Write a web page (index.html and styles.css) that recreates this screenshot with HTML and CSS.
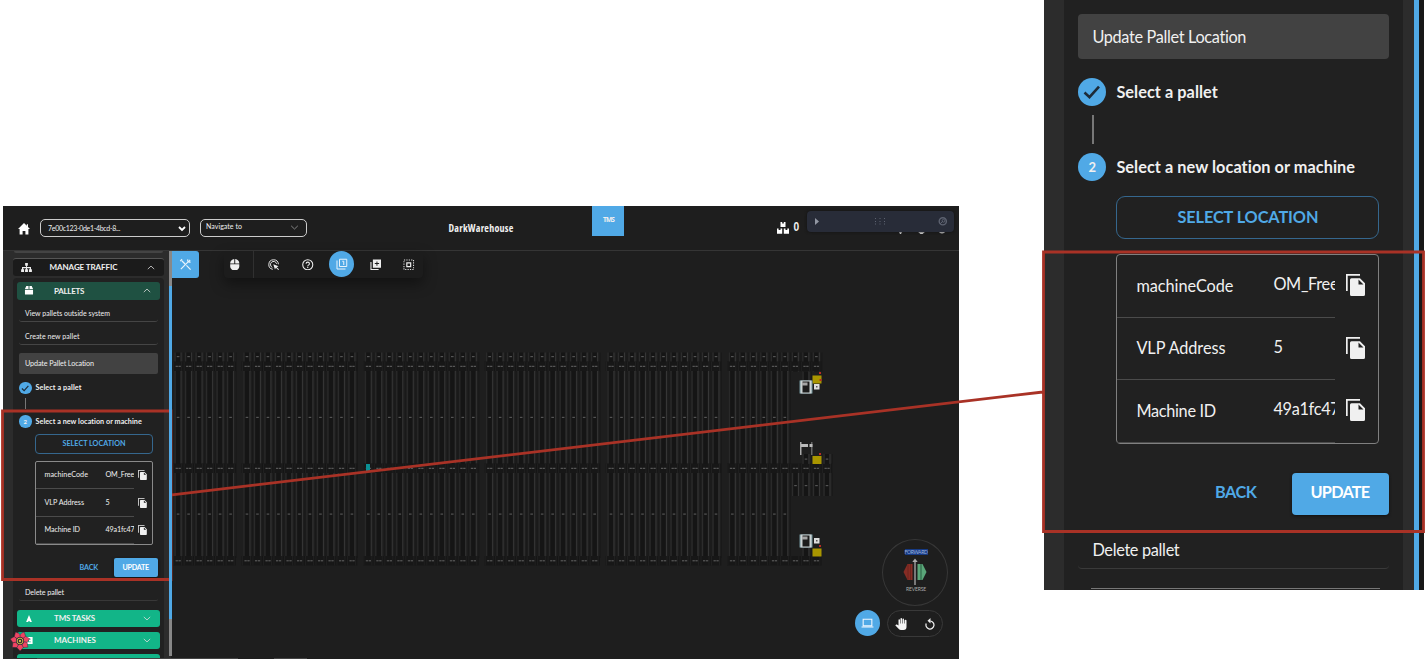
FILE: index.html
```html
<!DOCTYPE html>
<html lang="en">
<head>
<meta charset="utf-8">
<title>DarkWarehouse</title>
<link rel="stylesheet" href="styles.css">
</head>
<body>
<svg class="defs" aria-hidden="true">
  <symbol id="copy" viewBox="0 0 19 22"><path d="M0 0h14v1.700H1.700V17H0z" fill="currentColor"/><path d="M5.500 4.200H14l5 5V20.500q0 1.500-1.500 1.500h-12Q4 22 4 20.500V5.700q0-1.500 1.500-1.500zM12.500 5.500v5h5z" fill="currentColor" fill-rule="evenodd"/></symbol>
  <symbol id="check" viewBox="0 0 28 28"><path d="M6.500 14.500l5 4.700L21 8.700" fill="none" stroke="#1d2b38" stroke-width="2.600"/></symbol>
  <symbol id="down" viewBox="0 0 10 6"><path d="M1 1l4 3.800L9 1" fill="none" stroke="currentColor"/></symbol>
  <symbol id="up" viewBox="0 0 10 6"><path d="M1 5l4-3.800L9 5" fill="none" stroke="currentColor"/></symbol>
</svg>
<main class="sheet">
  <section class="app">
    <header class="bar">
      <svg class="home" viewBox="0 0 12 12"><path d="M6 0L0 6h1.600v5.500h3V8h2.800v3.500h3V6H12L10 4V1.200H8.800V2.800z" fill="#fff"/></svg>
      <div class="select run"><span data-width="72">7e00c123-0de1-4bcd-8...</span><svg class="caret" viewBox="0 0 8 6"><path d="M1 1l3 3 3-3" fill="none" stroke="#fff" stroke-width="1.800"/></svg></div>
      <div class="select nav"><span data-width="36">Navigate to</span><svg class="caret thin"><use href="#down"/></svg></div>
      <div class="title"><span data-width="65">DarkWarehouse</span></div>
      <div class="tile"><span data-width="11">TMS</span></div>
      <svg class="boxes" viewBox="0 0 12 12"><path d="M3.500 0h1.700v1.500h1.600V0h1.700v5h-5zM0 6.500h1.600V8H3.500V6.500h1.700v5.300H0zM6.800 6.500h1.700V8h1.800V6.500H12v5.300H6.800z" fill="#fff"/></svg>
      <b class="count">0</b>
      <svg class="peek" viewBox="0 0 50 4"><path d="M0 0h9L6 1 5 3H4L3 1zM21 0h9l-3.500 3h-2zM42 0q4 5 8 0l-2 0q-2 2-4 0z" fill="#ddd"/></svg>
      <div class="dock">
        <svg viewBox="0 0 147 21"><path d="M8 7l4 3.500L8 14z" fill="#9297a3"/><g fill="#5d6270"><path d="M68 7h1v1h-1zM72.500 7h1v1h-1zM77 7h1v1h-1zM68 10h1v1h-1zM72.500 10h1v1h-1zM77 10h1v1h-1zM68 12.500h1v1h-1zM72.500 12.500h1v1h-1zM77 12.500h1v1h-1z"/></g><circle cx="135.800" cy="10.300" r="3.600" fill="none" stroke="#5d6270" stroke-width="1.400"/><circle cx="136.500" cy="9.800" r="1.400" fill="none" stroke="#5d6270"/><path d="M133 13l3-3" stroke="#5d6270"/></svg>
      </div>
    </header>
    <div class="work">
      <aside class="side">
        <div class="stub"></div>
        <div class="traffic head"><svg class="hicon" viewBox="0 0 12 10"><path d="M4.500 0h3v3h-1v1.500H11V7h1v3H8.700V7h1V5.700H6.600V7h1v3H4.400V7h1V5.700H2.300V7h1v3H0V7h1V4.500h4.500V3h-1z" fill="#eee"/></svg><span data-width="68">MANAGE TRAFFIC</span><svg class="arrow"><use href="#up"/></svg></div>
        <div class="group">
          <div class="head pallets"><svg class="hicon" viewBox="0 0 10 10"><path d="M2 0h2.500v3.300H.5zM5.500 0H8l1.500 3.300h-4zM.5 4.200h9V9.500h-9z" fill="#fff"/></svg><span data-width="30">PALLETS</span><svg class="arrow"><use href="#up"/></svg></div>
          <div class="item"><span data-width="85">View pallets outside system</span></div>
          <div class="item second"><span data-width="54.500">Create new pallet</span></div>
          <div class="panel small">
            <div class="active"><span data-width="69">Update Pallet Location</span></div>
            <div class="step"><i class="dot"><svg><use href="#check"/></svg></i><span data-width="46">Select a pallet</span></div>
            <div class="link"></div>
            <div class="step two"><i class="dot">2</i><span data-width="106.500">Select a new location or machine</span></div>
            <div class="choose"><span data-width="63">SELECT LOCATION</span></div>
            <div class="table">
              <div class="row"><div class="cells"><span class="key" data-width="43.500">machineCode</span><span class="val">OM_Free</span></div><svg class="copy"><use href="#copy"/></svg></div>
              <div class="row"><div class="cells"><span class="key" data-width="39.500">VLP Address</span><span class="val">5</span></div><svg class="copy"><use href="#copy"/></svg></div>
              <div class="row"><div class="cells"><span class="key" data-width="35.500">Machine ID</span><span class="val">49a1fc47</span></div><svg class="copy"><use href="#copy"/></svg></div>
            </div>
            <div class="actions"><span class="back" data-width="18.500">BACK</span><b class="update"><span data-width="26.500">UPDATE</span></b></div>
            <div class="delete"><span data-width="39">Delete pallet</span></div>
          </div>
          <div class="head green"><svg class="hicon" viewBox="0 0 10 10"><path d="M5 1L1.800 9h2L5 7.500 6.200 9h2z" fill="#fff"/></svg><span data-width="41">TMS TASKS</span><svg class="arrow"><use href="#down"/></svg></div>
          <div class="head green"><svg class="hicon" viewBox="0 0 10 10"><path d="M1 1h8v8H1zM4 3h3v1H5v2h2v1H4z" fill="#fff" fill-rule="evenodd"/></svg><span data-width="42">MACHINES</span><svg class="arrow"><use href="#down"/></svg></div>
          <div class="head green last"></div>
        </div>
        <div class="scroll"></div>
        <svg class="flower" viewBox="-10 -10 20 20"><g id="petals" fill="#ef4462" stroke="#24283a" stroke-width=".4"></g><circle r="4" fill="#24283a"/><circle r="2.900" fill="none" stroke="#d8b944"/><circle r="1.200" fill="#d8b944"/><path d="M-1-9l1 2 1.500-1.500" stroke="#00a884" stroke-width="1.300" fill="none"/></svg>
      </aside>
      <div class="map">
        <svg class="lanes" id="lanes" viewBox="171 251 788 408"></svg>
        <div class="tools"><svg viewBox="0 0 14 14"><path d="M2 12L9.500 4.500M8 8l4.500 4.500M3 3l3.500 3.500M9.500 1.500q-1 3 3 3M10 4.500L12 2M1.300 3.300L3.300 1.300" fill="none" stroke="#e8f4fc" stroke-width="1.300"/></svg></div>
        <div class="toolbar">
          <div class="tool mouse"><svg viewBox="0 0 24 24"><path d="M11 0a9 9 0 0 0-8.500 9.500H11zM2.500 11v4.500a9.500 8.500 0 0 0 19 0V11zM13 0v9.500h8.500A9 9 0 0 0 13 0z" fill="#f0f0f0"/></svg></div>
          <div class="tool"><svg viewBox="0 0 24 24"><path d="M10 21.500A10 10 0 1 1 21.700 11M9 17.500A6.500 6.500 0 1 1 18 10" fill="none" stroke="#eee" stroke-width="2"/><path d="M11 11l11 4-4 2 5 4.500-1.500 1.500-5-5-2 4z" fill="#eee"/></svg></div>
          <div class="tool"><svg viewBox="0 0 24 24"><circle cx="12" cy="12" r="10.500" fill="none" stroke="#eee" stroke-width="2.200"/><path d="M8.500 10q0-3.500 3.500-3.500T15.500 10q0 1.500-2 2.800T12 15.500M12 16.500v2.300" fill="none" stroke="#eee" stroke-width="2.200"/></svg></div>
          <div class="tool on"><svg viewBox="0 0 24 24"><path d="M2 5v17h17M7 2.500h14.500V17H7zM12.500 6.500h3V14" fill="none" stroke="#e8f4fc" stroke-width="2"/></svg></div>
          <div class="tool"><svg viewBox="0 0 24 24"><path d="M2 6v16h16" fill="none" stroke="#eee" stroke-width="2.200"/><path d="M6 1h17v17H6zM13.500 5v3.500H10v2h3.500V14h2v-3.500H19v-2h-3.500V5z" fill="#eee" fill-rule="evenodd"/></svg></div>
          <div class="tool"><svg viewBox="0 0 24 24"><path d="M2 2h20v20H2z" fill="none" stroke="#ddd" stroke-width="2.200" stroke-dasharray="2.500 2.500"/><path d="M8 8h8v8H8z" fill="none" stroke="#eee" stroke-width="2.500"/></svg></div>
        </div>
        <div class="compass">
          <svg viewBox="0 0 66 66"><path d="M21.500 33l4-8h5v16h-5z" fill="#862c24"/><path d="M26 25.500v15M28.500 25v16" stroke="#6d251e"/><path d="M44.500 33l-4-8h-5v16h5z" fill="#5aa679"/><path d="M39 25v16" stroke="#285d42"/><path d="M33 21v25" stroke="#999" stroke-width="1.500"/><path d="M30.300 23L33 19.500l2.700 3.500z" fill="#aaa"/></svg>
          <span class="fwd" data-width="23">FORWARD</span><span class="rev" data-width="20">REVERSE</span>
        </div>
        <div class="controls">
          <div class="laptop"><svg viewBox="0 0 24 18"><path d="M4 2h16v12H4zM1 16.500h22" fill="none" stroke="#f0f7ff" stroke-width="2"/></svg></div>
          <div class="pill"><svg viewBox="0 0 24 24"><path d="M23 5.500V18a6 6 0 0 1-6 6h-5c-1.700 0-3.300-.7-4.400-2L.5 14.500 2 13.300c.5-.4 1.200-.4 1.800-.1L7 15V4a1.500 1.500 0 0 1 3 0v7h1V1.500a1.500 1.500 0 0 1 3 0V11h1V2.500a1.500 1.500 0 0 1 3 0V11h1V5.500a2 2 0 0 1 4 0z" fill="#f4f4f4"/></svg><svg viewBox="0 0 24 24"><path d="M4.500 11a8 8 0 1 0 8-5" fill="none" stroke="#eee" stroke-width="2.500"/><path d="M13 0v11L7 5.500z" fill="#eee"/></svg></div>
        </div>
        <div class="hscroll"><i></i><i></i></div>
      </div>
    </div>
  </section>
  <section class="inset">
    <div class="panel big">
      <div class="active"><span data-width="154">Update Pallet Location</span></div>
      <div class="step"><i class="dot"><svg><use href="#check"/></svg></i><span data-width="101.500">Select a pallet</span></div>
      <div class="link"></div>
      <div class="step two"><i class="dot">2</i><span data-width="239">Select a new location or machine</span></div>
      <div class="choose"><span data-width="141">SELECT LOCATION</span></div>
      <div class="table">
        <div class="row"><div class="cells"><span class="key" data-width="97">machineCode</span><span class="val">OM_Free</span></div><svg class="copy"><use href="#copy"/></svg></div>
        <div class="row"><div class="cells"><span class="key" data-width="89">VLP Address</span><span class="val">5</span></div><svg class="copy"><use href="#copy"/></svg></div>
        <div class="row"><div class="cells"><span class="key" data-width="79.500">Machine ID</span><span class="val">49a1fc47</span></div><svg class="copy"><use href="#copy"/></svg></div>
      </div>
      <div class="actions"><span class="back" data-width="41.500">BACK</span><b class="update"><span data-width="59">UPDATE</span></b></div>
      <div class="delete"><span data-width="87">Delete pallet</span></div>
      <div class="next"></div>
    </div>
    <div class="gutter"></div><div class="rail"></div>
  </section>
  <svg class="callout" viewBox="0 0 1426 660"><path d="M2.500 411H171V579.500H2.500zM1043.500 252H1423.500V531.500H1043.500zM172 494.800L1043 392" fill="none" stroke="#a93226" stroke-width="2.800"/></svg>
</main>
<script src="app.js"></script>
</body>
</html>
```
FILE: styles.css
```css
* { box-sizing: border-box; }
body { margin: 0; background: #fff; font-family: Lato, "Liberation Sans", sans-serif; color: #f0f0f0; }
svg { display: block; flex: none; }
.defs { position: absolute; width: 0; height: 0; }
.sheet { position: relative; display: flex; width: 1426px; height: 660px; overflow: hidden; }
span { white-space: nowrap; }
.callout { position: absolute; inset: 0; width: 1426px; height: 660px; }

.app { width: 956px; height: 453px; margin: 206px 0 0 3px; background: #1e1e1e; overflow: hidden; flex: none; }
.bar { position: relative; display: flex; height: 45px; border-bottom: 1px solid #353535; padding-left: 15px; font-size: 7px; }
.home { width: 12px; height: 12px; margin: 17px 10px 0 0; }
.select { display: flex; align-items: center; justify-content: space-between; height: 18px; margin-top: 13px; border: 1px solid #ccc; border-radius: 5px; flex: none; }
.run { width: 150px; padding: 0 3px 1px 7px; margin-right: 10px; }
.nav { width: 107px; padding: 0 7px 4px 5px; }
.caret { width: 8px; height: 6px; margin-top: 2px; }
.caret.thin { width: 9px; height: 5px; color: #999; }
.title { margin: 16px 0 0 141.500px; width: 65.500px; font: bold 10px/13px "Open Sans", sans-serif; font-stretch: condensed; }
.tile { width: 32px; height: 30px; margin-left: 78px; padding: 9px 0 0 11px; background: #50a9e6; font: bold 6.500px/9px "Open Sans", sans-serif; }
.boxes { width: 12px; height: 12px; margin: 16px 4px 0 153px; }
.count { font: bold 12px/12px "Liberation Sans", sans-serif; margin-top: 15px; transform: scaleX(.85); }
.peek { position: absolute; left: 893px; top: 25px; width: 50px; height: 4px; }
.dock { position: absolute; left: 804px; top: 5px; width: 147px; height: 21px; border-radius: 4px; background: #282c38; box-shadow: 0 0 3px #111; }

.work { display: flex; height: 408px; }
.side { position: relative; width: 168px; height: 408px; padding: 0 7px 0 9.500px; background: #2c2c2c; flex: none; }
.stub { height: 2px; margin: 0 1px 5px; border-radius: 0 0 3px 3px; background: #444; }
.head { display: flex; align-items: center; height: 17.500px; border-radius: 3px; font-size: 8px; font-weight: bold; color: #f0f0f0; }
.head .hicon { width: 10px; height: 9px; margin: 0 20px 0 7px; }
.head .arrow { width: 8px; height: 5px; margin: 0 9px 0 auto; color: #ddd; }
.traffic { border-top: 1px solid #555; background: #1b1b1b; }
.traffic .hicon { margin: 0 18px 0 8px; width: 11px; }
.group { height: 379.500px; margin-top: 2.500px; padding: 4px 4.500px 0; background: #212121; border-radius: 4px 4px 0 0; overflow: hidden; }
.pallets { background: #1f5142; }
.item { height: 22px; margin: 0 2px; padding: 7.500px 0 0 6px; border-bottom: 1px solid #454545; border-radius: 3px; font-size: 7px; line-height: 12px; }
.item.second { height: 23px; padding-top: 8px; }
.green { background: #12b588; margin-bottom: 4.500px; }
.last { margin: 0; }
.scroll { position: absolute; right: -1px; top: 0; width: 3px; height: 405px; background: linear-gradient(#888 0 35px, #50a9e6 35px 368px, #888 368px); z-index: 1; }
.flower { position: absolute; left: 7px; top: 380px; width: 20px; height: 20px; }

.map { position: relative; width: 788px; height: 408px; }
.lanes { width: 788px; height: 408px; }
.tools { position: absolute; left: 0; top: 0; display: grid; place-items: center; width: 28px; height: 27px; background: #50a9e6; border-radius: 0 3px 3px 0; }
.tools svg { width: 13px; height: 13px; }
.toolbar { position: absolute; left: 53px; top: 0; display: flex; width: 199px; height: 27px; border-radius: 0 0 4px 4px; background: #1c1c1c; box-shadow: 0 6px 14px rgba(0,0,0,.4); padding-left: 1px; }
.tool { width: 33.700px; height: 27px; display: grid; place-items: center; flex: none; }
.tool svg { width: 11.500px; height: 11.500px; }
.tool.mouse { width: 29px; padding-right: 9px; border-right: 1px solid #303030; margin-right: 3.400px; }
.tool.on svg { width: 12px; height: 12px; }
.tool.on { width: 25px; height: 26px; margin: 0 4.350px; border-radius: 50%; background: #50a9e6; }
.compass { position: absolute; left: 711px; top: 288px; width: 66px; height: 67px; border: 1px solid #373737; border-radius: 50%; font: 5px/6px Lato, sans-serif; }
.compass svg { width: 66px; height: 66px; margin: -1px; }
.compass span { position: absolute; left: 21.500px; }
.compass .fwd { top: 9px; background: #163a84; color: #9fb4df; }
.compass .rev { top: 46px; left: 23px; color: #aaa; }
.controls { position: absolute; left: 684px; top: 359px; display: flex; align-items: center; gap: 7px; }
.laptop { display: grid; place-items: center; width: 25px; height: 26px; margin-top: -1px; border-radius: 50%; background: #50a9e6; }
.laptop svg { width: 13px; height: 10px; }
.pill { display: flex; align-items: center; justify-content: space-between; width: 56px; height: 27px; border: 1px solid #393939; border-radius: 14px; padding: 0 6px 0 7px; }
.pill svg { width: 12px; height: 12px; }
.hscroll { position: absolute; left: -134px; top: 406.500px; display: flex; gap: 36px; }
.hscroll i { width: 201px; height: 2px; background: #444; }
.hscroll i + i { width: 33px; }

.panel .step, .panel .row, .panel .actions, .panel .active, .panel .choose, .panel .delete { display: flex; align-items: center; }
.active { background: #424242; }
.dot { display: grid; place-items: center; border-radius: 50%; background: #50a9e6; font-style: normal; font-weight: bold; flex: none; }
.dot svg { width: 100%; height: 100%; }
.choose { border: 1px solid #35678e; color: #50a9e6; font-weight: bold; justify-content: center; }
.table { border: 1px solid #8a8a8a; }
.cells { display: flex; align-items: center; height: 100%; border-bottom: 1px solid #4b4b4b; overflow: hidden; flex: none; }
.key { flex: none; }
.val { flex: none; margin-left: auto; }
.copy { color: #f0f0f0; }
.actions { justify-content: flex-end; }
.back { color: #50a9e6; font-weight: bold; }
.update { display: grid; place-items: center; background: #50a9e6; color: #fff; box-shadow: 0 1px 3px #111; }
.step { font-weight: bold; }

.small { margin: 8.500px 2px 0; font-size: 7.200px; line-height: 10px; }
.small .active { height: 20.500px; padding: 1px 0 0 6px; border-radius: 2px; }
.small .step { height: 13px; margin-top: 8px; gap: 4px; }
.small .dot { width: 12.500px; height: 12.500px; font-size: 6px; }
.small .link { width: 1px; height: 11px; margin: 3.500px 0 4px 6px; background: #777; }
.small .step.two { margin-top: 6px; }
.small .choose { width: 118px; height: 20px; margin: 6px 0 6.500px 16px; border-radius: 4px; }
.small .table { width: 118px; height: 84.500px; margin-left: 16px; border-radius: 2px; }
.small .row { height: 27.500px; gap: 4px; }
.small .cells { width: 98px; padding: 1px 0 0 8.500px; }
.small .val { width: 28.500px; letter-spacing: -.14px; }
.small .copy { width: 9px; height: 10px; }
.small .actions { height: 19px; margin-top: 13px; gap: 16px; }
.small .update { width: 43.500px; height: 19px; border-radius: 2px; }
.small .delete { height: 24px; margin-bottom: 8.500px; padding: 9px 0 0 6px; border-bottom: 1px solid #383838; border-radius: 2px; }

.inset { display: flex; width: 380px; height: 590px; margin-left: 85px; padding-left: 20px; background: #2c2c2c; flex: none; overflow: hidden; }
.gutter { width: 11px; background: #2c2c2c; }
.rail { width: 10px; background: linear-gradient(90deg, #50a9e6 0 5px, #181818 5px); }
.big { width: 339px; height: 590px; padding: 14px 14.500px 0 14.400px; background: #212121; font-size: 16.300px; line-height: 22px; flex: none; }
.big .active { height: 45px; padding-left: 14px; border-radius: 4px; }
.big .step { height: 28px; margin-top: 19px; gap: 10px; }
.big .dot { width: 28px; height: 28px; font-size: 13px; }
.big .link { width: 1.500px; height: 29px; margin: 9px 0 9px 14px; background: #777; }
.big .step.two { margin-top: 9px; }
.big .step.two span { padding-bottom: 1px; }
.big .choose { width: 263px; height: 43px; margin: 15px 0 15px 38px; border: 1.500px solid #35678e; border-radius: 9px; padding-bottom: 2px; }
.big .table { width: 263px; height: 190px; margin-left: 38px; border: 1.500px solid #808080; border-radius: 4px; }
.big .row { height: 62.500px; gap: 11px; }
.big .cells { width: 218px; padding-left: 19px; border-bottom-width: 1.500px; }
.big .val { width: 62px; margin-top: -3px; letter-spacing: -.3px; }
.big .copy { width: 19px; height: 22px; margin-top: -2px; }
.big .actions { height: 42px; margin-top: 29px; gap: 35px; }
.big .back { padding-bottom: 4px; }
.big .update { width: 97px; height: 42px; border-radius: 4px; padding-bottom: 4px; }
.big .delete { height: 54px; padding: 17px 0 0 14px; border-bottom: 1.500px solid #3a3a3a; border-radius: 4px; }
.big .next { height: 2px; margin: 18.500px 9px 0 13px; border-top: 1px solid #777; }
```
FILE: app.js
```js
document.querySelectorAll('[data-width]').forEach(function (el) {
  var w = el.getBoundingClientRect().width;
  var n = el.textContent.length;
  el.style.letterSpacing = ((+el.dataset.width - w) / n) + 'px';
});

// Flower badge petals
var petals = '';
for (var p = 0; p < 7; p++) {
  petals += '<path d="M0 0L-3.200-6.500 0-10 3.200-6.500z" transform="rotate(' + (p * 360 / 7 + 25) + ')"/>';
}
document.getElementById('petals').innerHTML = petals;

// Storage lanes: groups of eleven aisles crossed by three transfer rails
var out = '';
function rect(x, y, w, h, fill) {
  out += '<rect x="' + x + '" y="' + y + '" width="' + w + '" height="' + h + '" fill="' + fill + '"/>';
}
function lane(x, y, h) {
  rect(x - 3.5, y, 1, h, '#2c2c2c');
  rect(x - 2, y, 4, h, '#151515');
  rect(x + 2.5, y, 1, h, '#363636');
  rect(x + 5, y, 1, h, '#191919');
}
function dot(x, y) { rect(x - 1.3, y - 0.5, 2.6, 1.2, '#555'); }
function dash(x, y) { rect(x - 2.5, y - 0.5, 2.3, 1, '#666'); rect(x + 0.4, y - 0.5, 2.3, 1, '#666'); }
var xs = [];
for (var g = 0; g < 6; g++) {
  for (var i = 0; i < 11; i++) {
    var x = 125.6 + g * 121.35 + i * 10.5;
    if (x > 172 && x < 820) xs.push(x);
  }
}
xs.forEach(function (x) {
  lane(x, 352.5, 19);
  dot(x, 356.5);
  if (x < 790) {
    lane(x, 371, 187);
    dot(x, 417.3); dot(x, 514);
  }
});
xs.concat([827]).forEach(function (x) {
  [361.5, 463.5, 556].forEach(function (y, k) {
    if (x > 820 && k !== 1) return;
    rect(x - 5.3, y, 10.6, 9.5, '#171717');
    rect(x - 5, y, 1, 9.5, '#202020');
    rect(x + 3, y, 1, 9.5, '#202020');
    dash(x, y + 4.8);
  });
});
[795.5, 806, 816.5, 827].forEach(function (x) { lane(x, 473, 23); dot(x, 485.5); });
[806, 827].forEach(function (x) { lane(x, 454, 10); dot(x, 459); });
lane(806, 372, 8); lane(806, 548, 8);
function square(y) { rect(812.5, y, 9, 8, '#a99600'); }
square(375.5); square(456); square(548.5);
[[819, 372], [819.5, 379], [819, 453], [819, 545]].forEach(function (r) { rect(r[0], r[1], 2, 2, '#b52c25'); });
function station(y) {
  rect(799.5, y, 13, 13, '#719299'); rect(800.5, y, 11, 13, '#cbd2d3');
  rect(802.5, y + 1, 7, 11, '#1c1c1c'); rect(802, y + 2, 5.5, 3, '#a5a5a5');
}
station(380.5); station(534.5);
rect(814, 384, 5.5, 5.5, '#ddd'); rect(816, 386, 1.5, 1.5, '#555');
rect(814, 538, 5.5, 5.5, '#ddd'); rect(816, 540, 1.5, 1.5, '#555');
rect(800, 442, 1.5, 13, '#aaa'); rect(811, 442, 1.5, 13, '#666');
rect(801, 444, 7, 3, '#bbb'); rect(809.5, 444, 3, 3, '#bbb');
rect(366, 464, 4, 7, '#0b8f93');
document.getElementById('lanes').innerHTML = out;
```
